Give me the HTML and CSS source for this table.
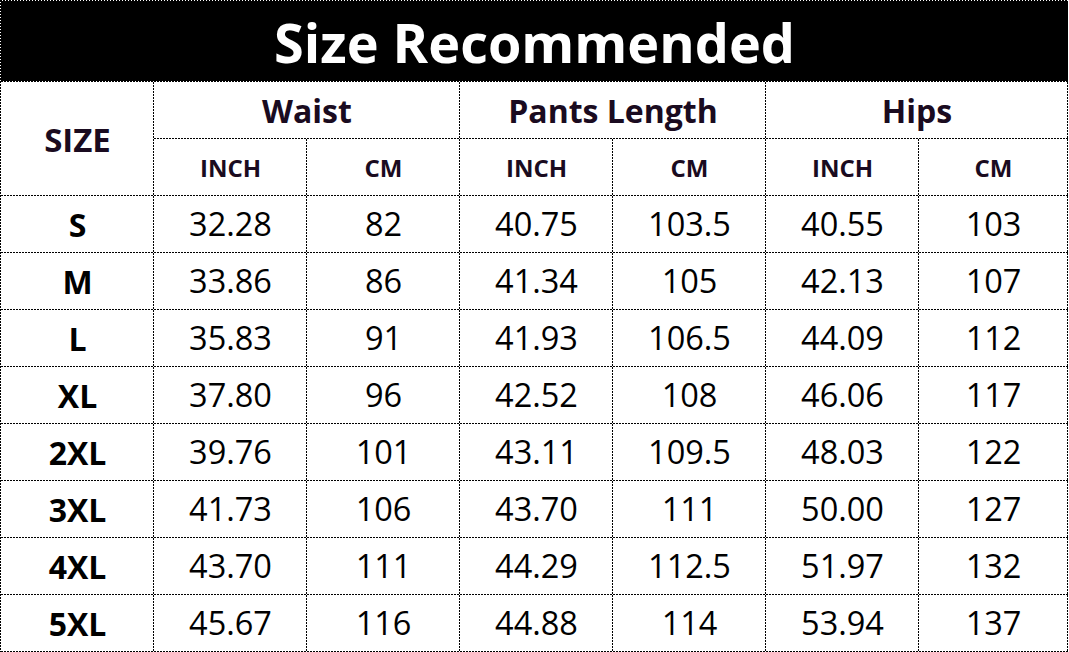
FILE: index.html
```html
<!DOCTYPE html>
<html>
<head>
<meta charset="utf-8">
<link rel="stylesheet" href="styles.css">
</head>
<body>
<div class="frame">
<table class="chart">
  <colgroup>
    <col class="c"><col class="c"><col class="c"><col class="c"><col class="c"><col class="c"><col class="c-last">
  </colgroup>
  <tr><td colspan="7" class="title">Size Recommended</td></tr>
  <tr>
    <td rowspan="2" class="head size-head">SIZE</td>
    <td colspan="2" class="head">Waist</td>
    <td colspan="2" class="head">Pants Length</td>
    <td colspan="2" class="head">Hips</td>
  </tr>
  <tr>
    <td class="sub">INCH</td><td class="sub">CM</td>
    <td class="sub">INCH</td><td class="sub">CM</td>
    <td class="sub">INCH</td><td class="sub">CM</td>
  </tr>
  <tr><td class="size">S</td><td>32.28</td><td>82</td><td>40.75</td><td>103.5</td><td>40.55</td><td>103</td></tr>
  <tr><td class="size">M</td><td>33.86</td><td>86</td><td>41.34</td><td>105</td><td>42.13</td><td>107</td></tr>
  <tr><td class="size">L</td><td>35.83</td><td>91</td><td>41.93</td><td>106.5</td><td>44.09</td><td>112</td></tr>
  <tr><td class="size">XL</td><td>37.80</td><td>96</td><td>42.52</td><td>108</td><td>46.06</td><td>117</td></tr>
  <tr><td class="size">2XL</td><td>39.76</td><td>101</td><td>43.11</td><td>109.5</td><td>48.03</td><td>122</td></tr>
  <tr><td class="size">3XL</td><td>41.73</td><td>106</td><td>43.70</td><td>111</td><td>50.00</td><td>127</td></tr>
  <tr><td class="size">4XL</td><td>43.70</td><td>111</td><td>44.29</td><td>112.5</td><td>51.97</td><td>132</td></tr>
  <tr><td class="size">5XL</td><td>45.67</td><td>116</td><td>44.88</td><td>114</td><td>53.94</td><td>137</td></tr>
</table>
</div>
</body>
</html>
```
FILE: styles.css
```css
html, body {
  margin: 0;
  padding: 0;
  background: #ffffff;
}
.frame {
  width: 1067px;
  padding: 1px 0 0 1px;
  background-image:
    repeating-linear-gradient(to right, #000 0 2px, transparent 2px 3px),
    repeating-linear-gradient(to bottom, #000 0 2px, transparent 2px 3px);
  background-size: 100% 1px, 1px 100%;
  background-position: left top, left top;
  background-repeat: no-repeat;
}
.chart {
  border-collapse: separate;
  border-spacing: 0;
  table-layout: fixed;
  width: 1067px;
  font-family: "Open Sans", "Noto Sans", sans-serif;
  color: #000;
}
.c { width: 153px; }
.c-last { width: 149px; }
.chart td {
  border: 0;
  text-align: center;
  vertical-align: middle;
  padding: 0;
  font-size: 32.5px;
  line-height: 1;
  height: 57px;
  background-image:
    repeating-linear-gradient(to right, #000 0 2px, transparent 2px 3px),
    repeating-linear-gradient(to bottom, #000 0 2px, transparent 2px 3px);
  background-size: 100% 1px, 1px 100%;
  background-position: left bottom, right top;
  background-repeat: no-repeat;
}
.chart td.title {
  height: 81px;
  color: #fff;
  font-weight: 700;
  font-size: 54px;
  background-image:
    repeating-linear-gradient(to right, #000 0 2px, transparent 2px 3px),
    linear-gradient(#000, #000);
  background-size: 100% 1px, 100% 80px;
  background-position: left bottom, left top;
  background-repeat: no-repeat;
}
.chart td.head {
  font-weight: 700;
  font-size: 32px;
  color: #1a0b20;
}
.chart td.size-head {
  font-size: 33px;
}
.chart td.sub {
  font-weight: 700;
  font-size: 24px;
  color: #1a0b20;
}
.chart td.size {
  font-weight: 700;
  font-size: 32px;
}
```
